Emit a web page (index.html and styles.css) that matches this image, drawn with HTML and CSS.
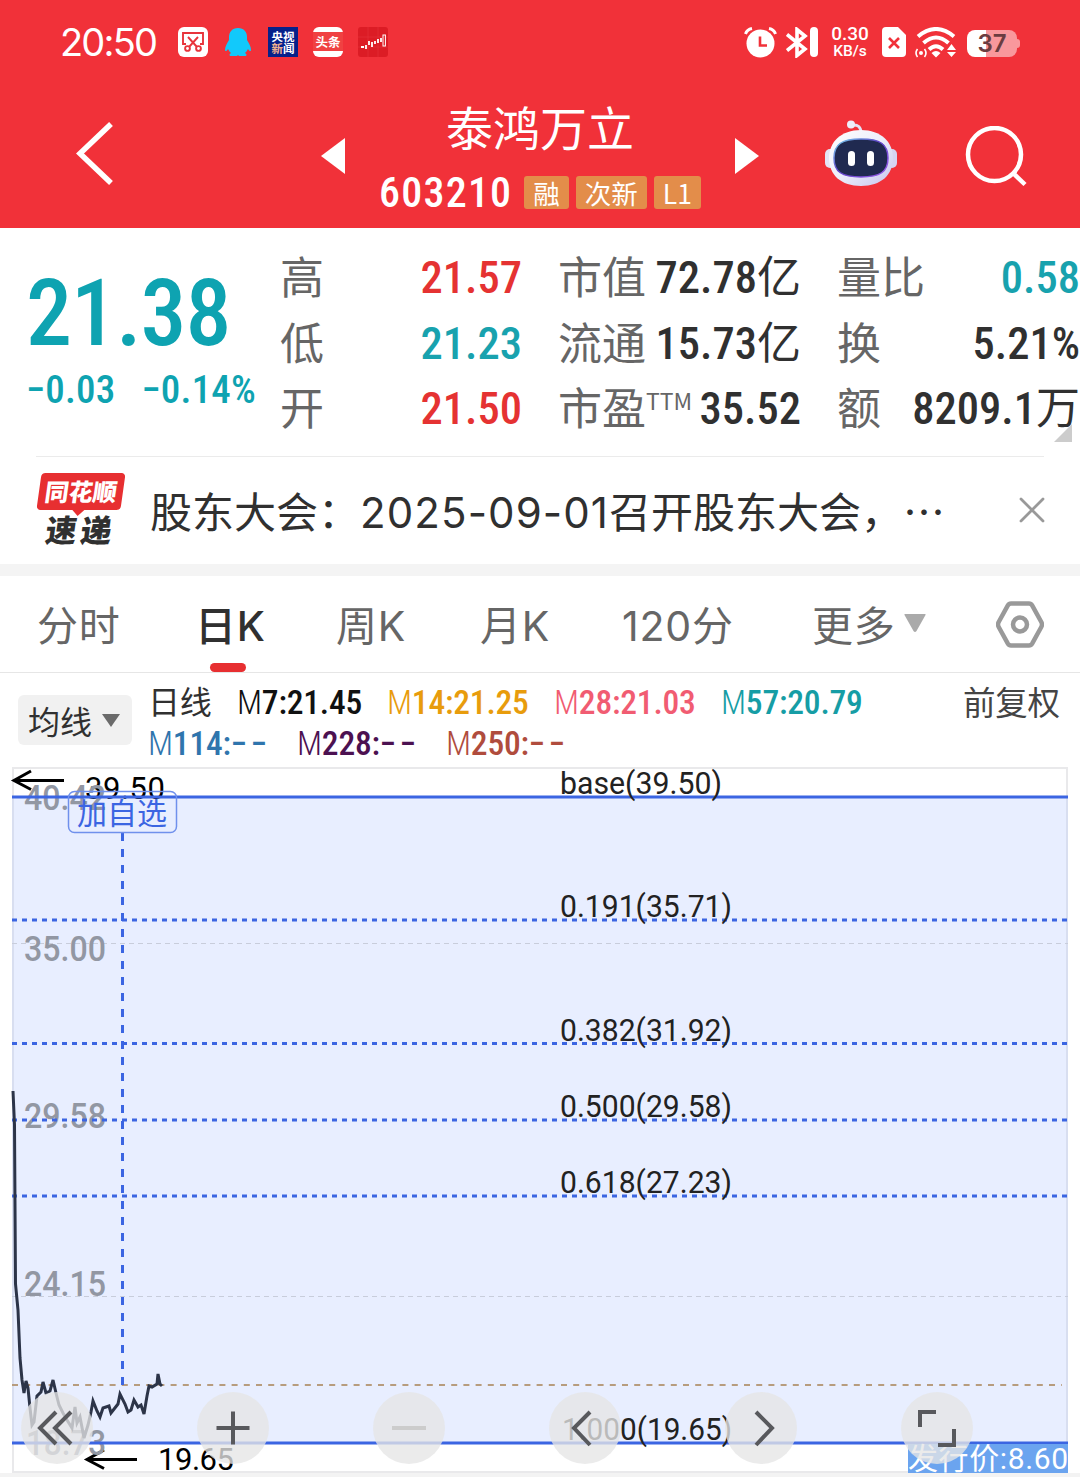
FILE: index.html
```html
<!DOCTYPE html>
<html lang="zh-CN">
<head>
  <meta charset="UTF-8" />
  <meta name="viewport" content="width=device-width, initial-scale=1.0" />
  <title>泰鸿万立 603210</title>
  <link rel="stylesheet" href="styles.css">
</head>
<body>
  <header class="top">
    <div class="statusbar">
      <span class="clock">20:50</span>
      <div class="notices">
        <svg width="30" height="30" viewBox="0 0 30 30">
          <rect width="30" height="30" rx="6" fill="#fff"/>
          <g fill="none" stroke="#e8343b" stroke-width="1.9">
            <path d="M8 17H5V6h20v11h-3M10 10l9 10M20 10l-9 10"/>
            <circle cx="9.5" cy="21.5" r="2.4"/><circle cx="20.5" cy="21.5" r="2.4"/>
          </g>
        </svg>
        <svg width="30" height="30" viewBox="0 0 30 30">
          <path d="M15 1c-6 0-9 4-9 9v3c-2 3-4 7-4 10 0 2 2 1 3-1 1 2 2 3 3 4-2 1-2 3 0 3h6l1-1 1 1h6c2 0 2-2 0-3 1-1 2-2 3-4 1 2 3 3 3 1 0-3-2-7-4-10v-3c0-5-3-9-9-9z" fill="#12c9fb"/>
        </svg>
        <div class="app app-news"><span>央视</span><span><i>新</i>闻</span></div>
        <div class="app app-toutiao">头条</div>
        <svg width="30" height="30" viewBox="0 0 30 30">
          <rect width="30" height="30" rx="3" fill="#dc1c25"/>
          <path d="M0 10h30M0 20h30M10 0v30M20 0v30" stroke="#e5343b" stroke-width=".6"/>
          <path d="M3 20h3M8 18v4M11 14v4M14 15v5M17 14v3M20 12v4M23 11v4" stroke="#fff" stroke-width="1.8"/>
          <rect x="25" y="8" width="2.4" height="11" fill="none" stroke="#fff"/>
        </svg>
      </div>
      <div class="signals">
        <svg width="33" height="31" viewBox="0 0 33 31">
          <circle cx="16.500" cy="16.500" r="14" fill="#fff"/>
          <path d="M1.500 7Q3 2.500 8 1.500M31.500 7Q30 2.500 25 1.500" fill="none" stroke="#fff" stroke-width="3"/>
          <path d="M16 9.500v9h7" fill="none" stroke="#f13139" stroke-width="2.600"/>
        </svg>
        <svg class="bt" width="32" height="31" viewBox="0 0 32 31">
          <path d="M1 7.500l18 14.500-8 6.500V2.500L19 9 1 23.500" fill="none" stroke="#fff" stroke-width="3.600"/>
          <rect x="24" y="0" width="8" height="30" rx="4" fill="#fff"/>
        </svg>
        <div class="speed"><span>0.30</span><span>KB/s</span></div>
        <svg class="sim" width="24" height="30" viewBox="0 0 24 30">
          <path d="M4 0h12l8 8v18a4 4 0 0 1-4 4H4a4 4 0 0 1-4-4V4a4 4 0 0 1 4-4z" fill="#fff"/>
          <path d="M7 11l10 10M17 11L7 21" stroke="#f13139" stroke-width="2.600"/>
        </svg>
        <svg class="wifi" width="42" height="31" viewBox="0 0 42 31">
          <g fill="none" stroke="#fff" stroke-width="4">
            <path d="M3 9.500Q21-5.500 39 9.500M8.500 16Q21 5 33.500 16M14 22.500Q21 16 28 22.500"/>
          </g>
          <path d="M16.500 26q4.500-4 9 0L21 30.500zM32 23l4.500-6 4.500 6zM32 25h9l-4.500 5z" fill="#fff"/>
          <circle cx="6" cy="26" r="2" fill="#fff"/>
          <path d="M2.500 22q-3 4 0 8M9.500 22q3 4 0 8" fill="none" stroke="#fff" stroke-width="1.600"/>
        </svg>
        <div class="battery"><span>37</span></div>
      </div>
    </div>

    <div class="titlebar">
      <svg class="back" width="38" height="66" viewBox="0 0 38 66"><path d="M35 3L4 32.500 35 62" fill="none" stroke="#fff" stroke-width="5.500"/></svg>
      <svg class="prev" width="24" height="36" viewBox="0 0 24 36"><path d="M24 0v36L0 18z" fill="#fff"/></svg>
      <div class="stock">
        <h1>泰鸿万立</h1>
        <div class="code">
          <b>603210</b><span>融</span><span>次新</span><span>L1</span>
        </div>
      </div>
      <svg class="next" width="24" height="36" viewBox="0 0 24 36"><path d="M0 0v36l24-18z" fill="#fff"/></svg>
      <svg class="robot" width="72" height="68" viewBox="0 0 72 68">
        <defs>
          <linearGradient id="shell" x1="0" y1="0" x2="1" y2="1"><stop offset="0" stop-color="#fff"/><stop offset=".5" stop-color="#edeefa"/><stop offset="1" stop-color="#c6c5ee"/></linearGradient>
          <linearGradient id="rim" x1="0" y1="0" x2="1" y2="1"><stop offset="0" stop-color="#77d5ec"/><stop offset=".45" stop-color="#5f43c8"/><stop offset="1" stop-color="#9b5bea"/></linearGradient>
        </defs>
        <path d="M27 5q9-1 9 8" fill="none" stroke="#e4e2f4" stroke-width="3"/>
        <circle cx="26" cy="4.500" r="4" fill="#eeeefa"/>
        <rect y="29" width="10" height="19" rx="5" fill="#e4e4f6"/>
        <rect x="62" y="29" width="10" height="19" rx="5" fill="#d6d4f2"/>
        <path d="M36 10c20 0 32 12 32 28 0 17-12 28-32 28S4 55 4 38c0-16 12-28 32-28z" fill="url(#shell)"/>
        <path d="M36 19c19 0 27 5 27 19s-8 19-27 19S9 52 9 38s8-19 27-19z" fill="#202a50" stroke="url(#rim)" stroke-width="1.500"/>
        <rect x="23" y="31" width="7" height="15" rx="3.500" fill="#fff"/><rect x="42" y="31" width="7" height="15" rx="3.500" fill="#fff"/>
      </svg>
      <svg class="search" width="62" height="62" viewBox="0 0 62 62"><circle cx="29.500" cy="28.500" r="26.500" fill="none" stroke="#fff" stroke-width="4.500"/><path d="M48 47l12 11.500" stroke="#fff" stroke-width="4.500"/></svg>
    </div>
  </header>

  <section class="quote">
    <div class="price">
      <div class="last">21.38</div>
      <div class="change"><span>−0.03</span><span>−0.14%</span></div>
    </div>
    <dl class="stats">
      <div><dt>高</dt><dd class="up">21.57</dd></div>
      <div><dt>低</dt><dd class="down">21.23</dd></div>
      <div><dt>开</dt><dd class="up">21.50</dd></div>
    </dl>
    <dl class="stats">
      <div><dt>市值</dt><dd>72.78<i>亿</i></dd></div>
      <div><dt>流通</dt><dd>15.73<i>亿</i></dd></div>
      <div><dt>市盈<sup>TTM</sup></dt><dd>35.52</dd></div>
    </dl>
    <dl class="stats">
      <div><dt>量比</dt><dd class="down">0.58</dd></div>
      <div><dt>换</dt><dd>5.21%</dd></div>
      <div><dt>额</dt><dd>8209.1<i>万</i></dd></div>
    </dl>
    <div class="corner"></div>
  </section>

  <section class="news">
    <div class="brand"><span class="brand-top">同花顺</span><span class="brand-bottom">速递</span></div>
    <p>股东大会：<span>2025-09-01</span>召开股东大会，⋯</p>
    <svg width="26" height="26" viewBox="0 0 26 26"><path d="M2 2l22 22M24 2L2 24" stroke="#999" stroke-width="2.800" stroke-linecap="round"/></svg>
  </section>

  <nav class="tabs">
    <span>分时</span>
    <span class="active">日K</span>
    <span>周K</span>
    <span>月K</span>
    <span>120分</span>
    <span>更多<svg width="22" height="19" viewBox="0 0 22 19"><path d="M1 0h20q1 0 .5 1l-9 16q-1.500 2-3 0l-9-16Q0 0 1 0z" fill="#aaa"/></svg></span>
    <svg class="gear" width="48" height="47" viewBox="0 0 48 47"><path d="M15 2.500h18q2 0 3.300 2.200l9 16.300q1.400 2.500 0 5l-9 16.300q-1.300 2.200-3.300 2.200H15q-2 0-3.300-2.200L2.700 26q-1.400-2.500 0-5l9-16.300Q13 2.500 15 2.500z" fill="none" stroke="#999" stroke-width="4.500"/><circle cx="24" cy="23.500" r="7" fill="none" stroke="#999" stroke-width="4.500"/></svg>
  </nav>

  <section class="averages">
    <div class="picker">均线<svg width="18" height="13" viewBox="0 0 18 13"><path d="M0 0h18L9 13z" fill="#6b6b6b"/></svg></div>
    <div class="lines">
      <div>
        <span class="period">日线</span>
        <span class="m7"><i>M</i>7:21.45</span>
        <span class="m14"><i>M</i>14:21.25</span>
        <span class="m28"><i>M</i>28:21.03</span>
        <span class="m57"><i>M</i>57:20.79</span>
        <span class="adjust">前复权</span>
      </div>
      <div>
        <span class="m114"><i>M</i>114:<em>−−</em></span>
        <span class="m228"><i>M</i>228:<em>−−</em></span>
        <span class="m250"><i>M</i>250:<em>−−</em></span>
      </div>
    </div>
  </section>

  <section class="chart">
    <svg width="1080" height="710" viewBox="0 767 1080 710">
      <rect x="0" y="1473" width="1080" height="4" fill="#f3f3f3"/>
      <rect x="13" y="768" width="1054" height="704" fill="#fff" stroke="#e9e9eb" stroke-width="2"/>
      <rect x="12" y="797" width="1056" height="646" fill="#e8eeff"/>
      <path d="M13 797v646M1067 797v646" stroke="#d8def0" stroke-width="2"/>
      <path class="grid" d="M12 943.500h1056M12 1296.500h1056"/>
      <path class="last-line" d="M12 1385h1050"/>

      <g class="extreme">
        <path d="M64 780.500H14M31 771L14 780.500l17 9M137 1459.500H88M104 1450l-17 9.500 17 9"/>
        <text x="85" y="799" textLength="80">39.50</text>
        <text x="158" y="1470" textLength="76">19.65</text>
      </g>

      <g class="axis">
        <text x="24" y="810" textLength="82" lengthAdjust="spacingAndGlyphs">40.42</text>
        <text x="24" y="961" textLength="82" lengthAdjust="spacingAndGlyphs">35.00</text>
        <text x="24" y="1128" textLength="82" lengthAdjust="spacingAndGlyphs">29.58</text>
        <text x="24" y="1296" textLength="82" lengthAdjust="spacingAndGlyphs">24.15</text>
        <text x="26" y="1455" textLength="80" lengthAdjust="spacingAndGlyphs">18.73</text>
      </g>

      <path class="fib" d="M12 920h1056M12 1043.500h1056M12 1120h1056M12 1196h1056"/>
      <path class="marker" d="M122.500 833v560"/>

      <path class="bound" d="M12 797h1056M12 1443h1056"/>
      <rect x="68.500" y="791.500" width="108" height="41" rx="6" fill="none" stroke="#6f90ec" stroke-width="1.500"/>
      <text class="fav" x="77" y="824" textLength="90">加自选</text>

      <polyline class="kline" points="13,1091 14.500,1125 15.500,1284 18,1310 20,1358 22,1380 24,1393 26,1381 28,1388 30,1408 32,1425 34,1422 37,1396 41,1392 43,1382 46,1393 50,1391 53,1380 56,1393 59,1405 63,1413 67,1420 72,1428 75,1407 77,1423 80,1417 84,1438 88,1425 91,1412 93,1401 97,1411 100,1417 103,1408 109,1406 111,1413 118,1404 120,1394 125,1404 128,1412 131,1410 134,1400 138,1407 141,1405 144,1414 147,1396 149,1386 152,1387 157,1384 158,1374 160,1384 162,1386"/>

      <g class="ratio">
        <text x="560" y="794" textLength="162" lengthAdjust="spacingAndGlyphs">base(39.50)</text>
        <text x="560" y="917" textLength="172" lengthAdjust="spacingAndGlyphs">0.191(35.71)</text>
        <text x="560" y="1041" textLength="172" lengthAdjust="spacingAndGlyphs">0.382(31.92)</text>
        <text x="560" y="1117" textLength="172" lengthAdjust="spacingAndGlyphs">0.500(29.58)</text>
        <text x="560" y="1193" textLength="172" lengthAdjust="spacingAndGlyphs">0.618(27.23)</text>
        <text x="562" y="1440" textLength="170" lengthAdjust="spacingAndGlyphs">1.000(19.65)</text>
      </g>
      <rect x="908" y="1444" width="160" height="29" fill="#6ba4ef"/>
      <text class="issue" x="908" y="1469" textLength="160">发行价:8.60</text>
    </svg>
    <div class="tools">
      <button><svg viewBox="0 0 72 72"><path d="M35 20L19 36l16 16M50 20L34 36l16 16"/></svg></button>
      <button><svg viewBox="0 0 72 72"><path d="M19.500 36h33M36 19.500v33"/></svg></button>
      <button class="off"><svg viewBox="0 0 72 72"><path d="M19 36h34"/></svg></button>
      <button><svg viewBox="0 0 72 72"><path d="M41 20L25 36l16 17"/></svg></button>
      <button><svg viewBox="0 0 72 72"><path d="M31 20l16 16-16 17"/></svg></button>
      <button><svg viewBox="0 0 72 72"><path d="M19 35V20h16M53 37v16H37"/></svg></button>
    </div>
  </section>
</body>
</html>
```
FILE: styles.css
```css
body {
  margin: 0;
  width: 1080px;
  height: 1477px;
  overflow: hidden;
  background: #fff;
  color: #303030;
  font-family: Roboto, "Noto Sans CJK SC", sans-serif;
}
h1, p, dl, dd { margin: 0; }
i, em { font-style: normal; }
svg { flex: none; }

/* red header */
.top {
  height: 228px;
  background: #f13139;
  color: #fff;
}
.statusbar {
  display: flex;
  align-items: center;
  height: 84px;
  padding: 0 61px 0 60px;
}
.clock {
  width: 118px;
  font: 400 38px/84px Inter, sans-serif;
  letter-spacing: -1.8px;
}
.notices {
  display: flex;
  gap: 15px;
}
.app {
  display: flex;
  flex-direction: column;
  align-items: center;
  justify-content: center;
  width: 30px;
  height: 30px;
  font: 700 11.500px/12px "Noto Sans CJK SC", sans-serif;
}
.app-news { background: #06218a; }
.app-news i { color: #f2b18e; }
.app-toutiao {
  border-radius: 6px;
  background: linear-gradient(#fff 5px, #f04142 5px, #f04142 24px, #fff 24px);
  font-size: 12.500px;
}
.signals {
  display: flex;
  align-items: center;
  margin-left: auto;
}
.bt { margin-left: 9px; }
.speed {
  display: flex;
  flex-direction: column;
  align-items: center;
  width: 40px;
  margin-left: 12px;
  font: 500 19px/18px Roboto, sans-serif;
}
.speed span + span { font-size: 15.500px; line-height: 16px; }
.sim { margin-left: 12px; }
.wifi { margin-left: 9px; }
.battery {
  position: relative;
  width: 50px;
  height: 27px;
  margin: 3px 2px 0 10px;
  border-radius: 8px;
  background: linear-gradient(90deg, #fff 19px, #f9989c 19px);
  color: #6b3c40;
  font: 600 24px/28px Inter, sans-serif;
  text-align: center;
}
.battery::after {
  content: "";
  position: absolute;
  right: -3px;
  top: 9px;
  width: 3px;
  height: 9px;
  border-radius: 0 3px 3px 0;
  background: #f9989c;
}

.titlebar {
  display: flex;
  align-items: flex-start;
  height: 144px;
  padding-left: 76px;
}
.back { margin-top: 37px; }
.prev { margin: 54px 0 0 207px; }
.stock {
  display: flex;
  flex-direction: column;
  align-items: center;
  width: 320px;
  margin: 14px 35px 0;
}
.stock h1 {
  font: 400 47px/56px "Noto Sans CJK SC", sans-serif;
}
.code {
  display: flex;
  align-items: center;
  gap: 7px;
  margin-top: 16px;
  height: 44px;
  white-space: nowrap;
}
.code b {
  margin-right: 5px;
  font-size: 42px;
  font-weight: 500;
  font-stretch: 75%;
  letter-spacing: 1.2px;
}
.code span {
  padding: 0 9px;
  border-radius: 3px;
  background: #e38d4a;
  font: 400 26.500px/33px "Noto Sans CJK SC", sans-serif;
}
.next { margin-top: 54px; }
.robot { margin: 36px 0 0 66px; }
.search { margin: 42px 0 0 68px; }

/* quote numbers */
.quote {
  position: relative;
  display: flex;
  height: 228px;
}
.quote::after {
  content: "";
  position: absolute;
  left: 36px;
  right: 36px;
  bottom: -1px;
  height: 1px;
  background: #ebebeb;
}
.price {
  width: 254px;
  padding: 37px 0 0 26px;
  color: #0ea3b1;
  white-space: nowrap;
}
.last {
  font-size: 92px;
  font-weight: 500;
  font-stretch: 75%;
  line-height: 98px;
  letter-spacing: -1px;
}
.change {
  display: flex;
  gap: 26px;
  font-size: 39px;
  font-weight: 500;
  font-stretch: 75%;
  line-height: 54px;
  letter-spacing: 0.2px;
}
.stats {
  width: 243px;
  margin-right: 36px;
  padding-top: 17px;
}
.stats:nth-child(2) { width: 242px; }
.stats:nth-child(4) { margin-right: 0; }
.stats > div {
  display: flex;
  justify-content: space-between;
  height: 65.500px;
  line-height: 67px;
  white-space: nowrap;
}
.stats dt {
  color: #666;
  font: 400 44px/60px "Noto Sans CJK SC", sans-serif;
}
.stats sup {
  font-size: 23px;
  line-height: 0;
  vertical-align: 15px;
}
.stats dd {
  font-size: 44.500px;
  font-weight: 500;
  font-stretch: 75%;
}
.stats dd i {
  font: 400 44px/1px "Noto Sans CJK SC", sans-serif;
}
.stats .up { color: #e53232; }
.stats .down { color: #18a2ae; }
.corner {
  position: absolute;
  right: 8px;
  bottom: 14px;
  border-left: 18px solid transparent;
  border-bottom: 18px solid #ccc;
}

/* news strip */
.news {
  display: flex;
  align-items: center;
  height: 108px;
  padding: 0 35px 0 37px;
  border-bottom: 12px solid #f4f4f4;
}
.brand {
  display: flex;
  flex-direction: column;
  align-items: center;
  width: 88px;
  margin-right: 25px;
  font: 900 25px/38px "Noto Sans CJK SC", sans-serif;
}
.brand-top {
  position: relative;
  width: 84px;
  height: 37px;
  border-radius: 4px;
  background: #e72f31;
  color: #fff;
  font-size: 24px;
  line-height: 36px;
  text-align: center;
  transform: skewX(-8deg);
}
.brand-top::after {
  content: "";
  position: absolute;
  left: 36px;
  top: 37px;
  border: 6px solid transparent;
  border-top-color: #e72f31;
  border-bottom: 0;
}
.brand-bottom {
  font-size: 31px;
  letter-spacing: 4px;
  transform: skewX(-8deg);
}
.news p {
  flex: 1;
  padding-top: 3px;
  font: 400 42px/60px "Noto Sans CJK SC", sans-serif;
  white-space: nowrap;
}
.news p span { font-family: Inter, sans-serif; letter-spacing: 1.1px; }

/* period tabs */
.tabs {
  display: grid;
  grid-template-columns: 158px 141px 144px 142px 190px 184px 48px;
  align-items: center;
  height: 96px;
  padding-left: 37px;
  border-bottom: 1px solid #e6e6e6;
  color: #666;
  font: 400 41px/60px Inter, "Noto Sans CJK SC", sans-serif;
}
.tabs span { padding-top: 3px; letter-spacing: 0.8px; }
.tabs span svg { margin-left: 8px; vertical-align: 8px; }
.tabs .active {
  position: relative;
  color: #303030;
  font-weight: 500;
}
.tabs .active::after {
  content: "";
  position: absolute;
  left: 15px;
  bottom: -16px;
  width: 36px;
  height: 9px;
  border-radius: 5px;
  background: #e72f31;
}

/* moving averages */
.averages {
  display: flex;
  height: 94px;
  padding-left: 18px;
}
.picker {
  display: flex;
  align-items: center;
  gap: 10px;
  box-sizing: border-box;
  width: 114px;
  height: 50px;
  margin: 22px 16px 0 0;
  padding-left: 10px;
  border-radius: 6px;
  background: #f1f1f1;
  font-size: 32px;
}
.lines {
  flex: 1;
  padding-top: 9px;
  font-size: 33.500px;
  font-weight: 500;
  font-stretch: 75%;
  letter-spacing: -0.2px;
}
.lines > div {
  display: flex;
  height: 41px;
  line-height: 42px;
}
.lines span { width: 167px; white-space: nowrap; }
.lines i { font-weight: 300; }
.lines em { letter-spacing: 3.5px; }
.lines .period, .lines .adjust {
  width: 89px;
  font: 400 32px/37px "Noto Sans CJK SC", sans-serif;
}
.lines .adjust { width: 98px; margin-left: 75px; font-size: 32.500px; color: #444; }
.lines .m7 { width: 150px; color: #111; }
.lines .m14 { color: #e89c0c; }
.lines .m28 { color: #f15c72; }
.lines .m57 { color: #169da5; }
.lines .m114 { width: 149px; color: #2f75ad; }
.lines .m228 { width: 149px; color: #4c1151; }
.lines .m250 { color: #b04c3d; }

/* chart */
.chart {
  position: relative;
  height: 710px;
}
.chart > svg { display: block; }
.chart text { font-family: Roboto, "Noto Sans CJK SC", sans-serif; }
.grid { stroke: #c8cddb; stroke-dasharray: 5 4; }
.last-line { stroke: #b79c7e; stroke-width: 2; stroke-dasharray: 6 6.200; }
.axis text { font-size: 35px; font-weight: 500; fill: #9297a3; }
.fib { stroke: #3b65e2; stroke-width: 3; stroke-dasharray: 5 5; }
.marker { stroke: #3b65e2; stroke-width: 3; stroke-dasharray: 8 8; }
.bound { stroke: #3b65e2; stroke-width: 3; }
.extreme path { fill: none; stroke: #000; stroke-width: 3; }
.extreme text { font-size: 31px; fill: #000; }
.chart .fav { font-family: "Noto Sans CJK SC", sans-serif; font-size: 30px; fill: #3b65e2; }
.kline { fill: none; stroke: #2c3448; stroke-width: 3; }
.ratio text { font-size: 32px; fill: #222; }
.issue { font-size: 30px; fill: #fff; }

.tools {
  position: absolute;
  left: 21px;
  top: 625px;
  display: flex;
  gap: 104px;
}
.tools button {
  width: 72px;
  height: 72px;
  padding: 0;
  border: 0;
  border-radius: 50%;
  background: rgba(230, 230, 230, 0.78);
}
.tools svg {
  display: block;
  fill: none;
  stroke: #58595d;
  stroke-width: 4;
}
.tools .off svg { stroke: #ccc; }
```
